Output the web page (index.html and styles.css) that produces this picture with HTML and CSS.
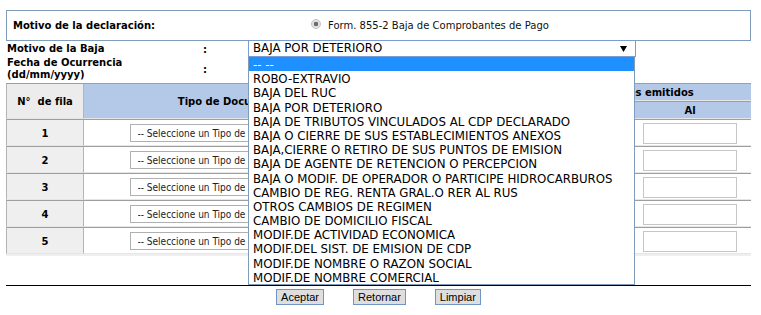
FILE: index.html
```html
<!DOCTYPE html>
<html lang="es">
<head>
    <meta charset="UTF-8">
    <title>Baja de Comprobantes de Pago</title>
    <link rel="stylesheet" href="styles.css">
</head>
<body>
<div class="page">

    <div class="decl">
        <span class="decl-label">Motivo de la declaración:</span>
        <span class="decl-option"><span class="radio"></span>Form. 855-2 Baja de Comprobantes de Pago</span>
    </div>

    <div class="fields">
        <div class="field-label">Motivo de la Baja</div>
        <div class="colon">:</div>
        <div class="combo">
            <div class="combo-box">BAJA POR DETERIORO
                <svg class="arrow" width="7" height="6" viewBox="0 0 7 6"><path d="M0 0H7L3.5 6Z" fill="#000"/></svg>
            </div>
            <ul class="combo-list">
                <li class="selected">-- --</li>
                <li>ROBO-EXTRAVIO</li>
                <li>BAJA DEL RUC</li>
                <li>BAJA POR DETERIORO</li>
                <li>BAJA DE TRIBUTOS VINCULADOS AL CDP DECLARADO</li>
                <li>BAJA O CIERRE DE SUS ESTABLECIMIENTOS ANEXOS</li>
                <li>BAJA,CIERRE O RETIRO DE SUS PUNTOS DE EMISION</li>
                <li>BAJA DE AGENTE DE RETENCION O PERCEPCION</li>
                <li>BAJA O MODIF. DE OPERADOR O PARTICIPE HIDROCARBUROS</li>
                <li>CAMBIO DE REG. RENTA GRAL.O RER AL RUS</li>
                <li>OTROS CAMBIOS DE REGIMEN</li>
                <li>CAMBIO DE DOMICILIO FISCAL</li>
                <li>MODIF.DE ACTIVIDAD ECONOMICA</li>
                <li>MODIF.DEL SIST. DE EMISION DE CDP</li>
                <li>MODIF.DE NOMBRE O RAZON SOCIAL</li>
                <li>MODIF.DE NOMBRE COMERCIAL</li>
            </ul>
        </div>
        <div class="field-label">Fecha de Ocurrencia<br>(dd/mm/yyyy)</div>
        <div class="colon">:</div>
        <div></div>
    </div>

    <table class="docs">
        <colgroup>
            <col class="c-num">
            <col class="c-tipo">
            <col class="c-serie">
            <col class="c-del">
            <col class="c-al">
        </colgroup>
        <tr>
            <th rowspan="2" class="th-num">N°&nbsp; de fila</th>
            <th rowspan="2">Tipo de Documento</th>
            <th rowspan="2">Serie</th>
            <th colspan="2">Comprobantes emitidos</th>
        </tr>
        <tr>
            <th>Del</th>
            <th>Al</th>
        </tr>
        <tr>
            <td class="num">1</td>
            <td class="tipo"><select class="doc-select"><option>-- Seleccione un Tipo de Documento --</option></select></td>
            <td><input class="cell-input" type="text"></td>
            <td><input class="cell-input" type="text"></td>
            <td><input class="cell-input" type="text"></td>
        </tr>
        <tr>
            <td class="num">2</td>
            <td class="tipo"><select class="doc-select"><option>-- Seleccione un Tipo de Documento --</option></select></td>
            <td><input class="cell-input" type="text"></td>
            <td><input class="cell-input" type="text"></td>
            <td><input class="cell-input" type="text"></td>
        </tr>
        <tr>
            <td class="num">3</td>
            <td class="tipo"><select class="doc-select"><option>-- Seleccione un Tipo de Documento --</option></select></td>
            <td><input class="cell-input" type="text"></td>
            <td><input class="cell-input" type="text"></td>
            <td><input class="cell-input" type="text"></td>
        </tr>
        <tr>
            <td class="num">4</td>
            <td class="tipo"><select class="doc-select"><option>-- Seleccione un Tipo de Documento --</option></select></td>
            <td><input class="cell-input" type="text"></td>
            <td><input class="cell-input" type="text"></td>
            <td><input class="cell-input" type="text"></td>
        </tr>
        <tr>
            <td class="num">5</td>
            <td class="tipo"><select class="doc-select"><option>-- Seleccione un Tipo de Documento --</option></select></td>
            <td><input class="cell-input" type="text"></td>
            <td><input class="cell-input" type="text"></td>
            <td><input class="cell-input" type="text"></td>
        </tr>
    </table>

    <div class="actions">
        <button class="btn">Aceptar</button>
        <button class="btn">Retornar</button>
        <button class="btn">Limpiar</button>
    </div>

</div>
</body>
</html>
```

FILE: styles.css
```css
body {
    margin: 0;
    padding: 0;
    background-color: #fff;
    color: #000;
    font-family: "DejaVu Sans", Verdana, sans-serif;
    font-size: 10px;
}

.page {
    width: 745px;
    padding: 10px 0 0 6px;
}

/* motivo de la declaracion */
.decl {
    display: flex;
    align-items: center;
    height: 29px;
    border: 1px solid #7f9db9;
}

.decl-label {
    box-sizing: border-box;
    width: 304px;
    padding-left: 6px;
    font-weight: bold;
}

.decl-option {
    display: flex;
    align-items: center;
    color: #111;
}

.radio {
    box-sizing: border-box;
    width: 10px;
    height: 10px;
    margin: -4px 7px 0 0;
    border: 1px solid #c2c2c2;
    border-radius: 50%;
    background: radial-gradient(circle, #6d6d6d 0, #6d6d6d 2px, #e4e4e4 2.6px);
}

/* campos */
.fields {
    display: grid;
    grid-template-columns: 196px 46px 387px;
    grid-template-rows: 16px 24px;
    margin-left: 1px;
    font-weight: bold;
}

.field-label {
    line-height: 12px;
    align-self: center;
}

.colon {
    align-self: center;
}

.combo {
    position: relative;
    margin-left: -1px;
}

.combo-box {
    box-sizing: border-box;
    height: 17px;
    margin-top: -1px;
    padding-left: 4px;
    border: 1px solid #7a9cd3;
    font-weight: normal;
    font-size: 11.8px;
    line-height: 15px;
    background-color: #fff;
}

.arrow {
    position: absolute;
    right: 9px;
    top: 5px;
}

.combo-list {
    position: absolute;
    top: 16px;
    left: 0;
    z-index: 2;
    box-sizing: border-box;
    width: 387px;
    margin: 0;
    padding: 0;
    list-style: none;
    border: 1px solid #7f9db9;
    border-top: none;
    background-color: #fff;
    font-weight: normal;
    font-size: 11.8px;
}

.combo-list li {
    height: 14.19px;
    line-height: 14px;
    padding-top: 1px;
    box-sizing: border-box;
    padding-left: 4px;
    white-space: nowrap;
    overflow: hidden;
}

.combo-list .selected {
    background-color: #1e90ff;
    color: #fff;
}

/* tabla de documentos */
.docs {
    width: 745px;
    margin-top: 2px;
    table-layout: fixed;
    border-collapse: separate;
    border-spacing: 0;
    background-color: #efefef;
    border-bottom: 2px solid #efefef;
}

.c-num { width: 77px; }
.c-tipo { width: 298px; }
.c-serie { width: 120px; }
.c-del { width: 127px; }
.c-al { width: 123px; }

.docs th,
.docs td {
    padding: 0;
    border-top: 1px solid #9e9e9e;
    border-left: 1px solid #b4b4b4;
    border-bottom: 1px solid #e6e6e6;
    text-align: center;
}

.docs th {
    height: 16px;
    background-color: #b4c8e8;
    font-weight: bold;
}

.docs th.th-num {
    background-color: #ececec;
}

.docs td {
    height: 24px;
    padding-top: 1px;
    background-color: #fff;
}

.docs td.num {
    background-color: #efefef;
    font-weight: bold;
}

.doc-select {
    width: 205px;
    height: 18px;
    margin-left: -1px;
    padding: 0 0 0 3px;
    border: 1px solid #b0b0b0;
    background-color: #fff;
    font-family: "DejaVu Sans Condensed", "DejaVu Sans", sans-serif;
    font-size: 10px;
    color: #222;
}

.cell-input {
    box-sizing: border-box;
    width: 94px;
    height: 21px;
    margin: 0;
    border: 1px solid #c6c6c6;
    vertical-align: middle;
}

/* botones */
.actions {
    display: flex;
    justify-content: center;
    gap: 29px;
    margin-top: 29px;
    padding-top: 3px;
    border-top: 1px solid #000;
}

.btn {
    height: 16px;
    padding: 0 4px;
    border: 1px solid #7094c5;
    background-color: #dedede;
    color: #000;
    font-family: "Liberation Sans", Arial, sans-serif;
    font-size: 11px;
    line-height: 14px;
}
```
